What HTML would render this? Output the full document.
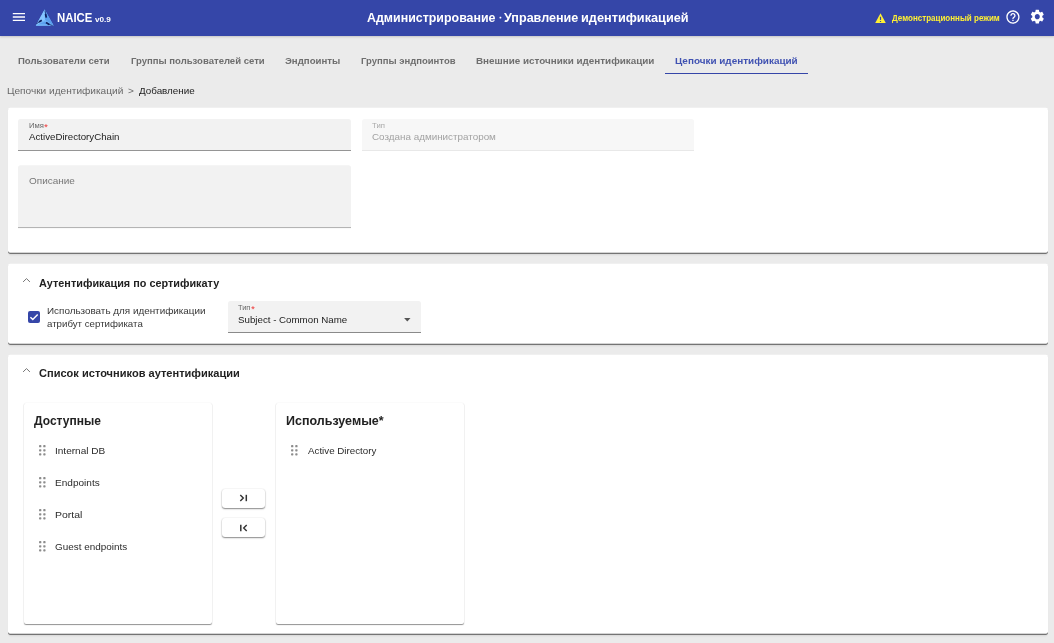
<!DOCTYPE html>
<html lang="ru">
<head>
<meta charset="utf-8">
<title>NAICE</title>
<style>
*{box-sizing:border-box;margin:0;padding:0}
html,body{width:1054px;height:643px;overflow:hidden;background:#ebebeb;font-family:"Liberation Sans",sans-serif;color:#222}
.abs{position:absolute}
.hdr{position:absolute;left:0;top:0;width:1054px;height:36px;background:#3546a8;box-shadow:0 1px 2px rgba(0,0,0,.17)}
.t{position:absolute;white-space:nowrap;line-height:1;transform-origin:0 0}
.card{position:absolute;left:8px;width:1040px;background:#fff;border-radius:2px;box-shadow:0 1px 0.6px rgba(0,0,0,.62),0 2.5px 2px -1px rgba(0,0,0,.09)}
.fld{position:absolute;background:#f2f2f2;border-radius:2.5px 2.5px 0 0;border-bottom:1px solid #8a8a8a}
.pane{position:absolute;background:#fff;border-radius:2px;box-shadow:0 1px 1px rgba(0,0,0,.42),0 0 1.5px rgba(0,0,0,.09)}
.btn{position:absolute;left:222px;width:43px;height:19px;background:#fff;border-radius:3px;box-shadow:0 1px 1.5px rgba(0,0,0,.45),0 0 1.5px rgba(0,0,0,.13)}
.dots{position:absolute;width:7px;height:11px}
</style>
</head>
<body><div id="root" style="position:absolute;left:0;top:0;width:1054px;height:643px;will-change:transform">
<!-- cards -->
<div class="card" style="top:108px;height:145px;transform:translateY(-0.2px)"></div>
<div class="card" style="top:264px;height:80px;transform:translateY(-0.15px)"></div>
<div class="card" style="top:355px;height:279px;transform:translateY(-0.2px)"></div>

<!-- fields -->
<div class="fld" style="left:18px;top:119px;width:332.5px;height:32px;transform:translateY(-0.1px)"></div>
<div class="fld" style="left:362px;top:119px;width:331.5px;height:32px;background:#f7f7f7;border-bottom-color:#e6e6e6;transform:translateY(-0.1px)"></div>
<div class="fld" style="left:18px;top:165px;width:332.5px;height:63px;transform:translateY(0.2px)"></div>
<div class="fld" style="left:228px;top:301px;width:193px;height:32px"></div>

<!-- panes -->
<div class="pane" style="left:23.75px;top:402.75px;width:188px;height:221px"></div>
<div class="pane" style="left:275.75px;top:402.75px;width:188.5px;height:221px"></div>
<div class="btn" style="top:489px"></div>
<div class="btn" style="top:518.25px"></div>
<svg class="abs" style="left:238px;top:492px" width="12" height="12" viewBox="0 0 12 12"><path d="M2.3 3L5.3 6L2.3 9" fill="none" stroke="#333" stroke-width="1.4"/><path d="M8.3 2.8V9.2" stroke="#333" stroke-width="1.5"/></svg>
<svg class="abs" style="left:238px;top:522px" width="12" height="12" viewBox="0 0 12 12"><path d="M8.7 3L5.7 6L8.7 9" fill="none" stroke="#333" stroke-width="1.4"/><path d="M2.8 2.8V9.2" stroke="#333" stroke-width="1.5"/></svg>

<!-- header -->
<div class="hdr">
  <svg class="abs" style="left:12px;top:12px" width="14" height="10" viewBox="0 0 14 10"><path d="M0.8 1.6h12.2M0.8 5h12.2M0.8 8.4h12.2" stroke="#fff" stroke-width="1.4"/></svg>
  <svg class="abs" style="left:35px;top:9px" width="20" height="18" viewBox="0 0 20 18"><path d="M9.6 0.6L18.6 16.6L0.8 16.8Z" fill="#74b8fa"/><path d="M9.6 0.6L18.6 16.6L9.8 11Z" fill="#5a9fee"/><path d="M9.6 0.6L9.8 11L0.8 16.8Z" fill="#86c6ff"/><path d="M0.8 16.8L9.8 11L18.6 16.6Z" fill="#72b6f8"/><path d="M3 15.2L9.8 12.4L16.5 15.2Z" fill="#5a9fee"/><path d="M10 1.6L10.7 5.2" stroke="#16286a" stroke-width="0.8"/><path d="M10.6 5L11.3 8.6" stroke="#0f1f5e" stroke-width="1.8"/><path d="M1.4 14.8L4.2 13" stroke="#16286a" stroke-width="0.8"/><path d="M4 13.1L6.8 11.3" stroke="#0f1f5e" stroke-width="1.8"/><path d="M14 15.3L17.6 16.6" stroke="#16286a" stroke-width="0.8"/><path d="M11 13.6L14.2 15.5" stroke="#0f1f5e" stroke-width="1.8"/></svg>
  <svg class="abs" style="left:875px;top:12.5px" width="11" height="10.5" viewBox="0 0 11 10.5"><path d="M5.5 0.3L10.9 10.2H0.1Z" fill="#fff033"/><path d="M5.5 3.8v3.2M5.5 7.9v1.2" stroke="#3546a8" stroke-width="1.2"/></svg>
  <svg class="abs" style="left:1004.75px;top:8.95px" width="15.9" height="16.1" preserveAspectRatio="none" viewBox="0 0 24 24"><path fill="#fff" d="M11 18h2v-2h-2v2zm1-16C6.48 2 2 6.48 2 12s4.48 10 10 10 10-4.48 10-10S17.52 2 12 2zm0 18c-4.41 0-8-3.59-8-8s3.59-8 8-8 8 3.59 8 8-3.59 8-8 8zm0-14c-2.21 0-4 1.79-4 4h2c0-1.1.9-2 2-2s2 .9 2 2c0 2-3 1.75-3 5h2c0-2.25 3-2.5 3-5 0-2.21-1.79-4-4-4z"/></svg>
  <svg class="abs" style="left:1028.95px;top:8.35px" width="16.6" height="17.3" preserveAspectRatio="none" viewBox="0 0 24 24"><path fill="#fff" d="M19.14 12.94c.04-.3.06-.61.06-.94 0-.32-.02-.64-.07-.94l2.03-1.58a.49.49 0 0 0 .12-.61l-1.92-3.32a.488.488 0 0 0-.59-.22l-2.39.96c-.5-.38-1.03-.7-1.62-.94l-.36-2.54a.484.484 0 0 0-.48-.41h-3.84c-.24 0-.43.17-.47.41l-.36 2.54c-.59.24-1.13.57-1.62.94l-2.39-.96c-.22-.08-.47 0-.59.22L2.74 8.87c-.12.21-.08.47.12.61l2.03 1.58c-.05.3-.09.63-.09.94s.02.64.07.94l-2.03 1.58a.49.49 0 0 0-.12.61l1.92 3.32c.12.22.37.29.59.22l2.39-.96c.5.38 1.03.7 1.62.94l.36 2.54c.05.24.24.41.48.41h3.84c.24 0 .44-.17.47-.41l.36-2.54c.59-.24 1.13-.56 1.62-.94l2.39.96c.22.08.47 0 .59-.22l1.92-3.32c.12-.22.07-.47-.12-.61l-2.01-1.58zM12 15.6c-1.98 0-3.6-1.62-3.6-3.6s1.62-3.6 3.6-3.6 3.6 1.62 3.6 3.6-1.62 3.6-3.6 3.6z"/></svg>
</div>

<svg class="abs" style="left:497px;top:14px" width="7" height="7" viewBox="0 0 7 7"><rect x="2.55" y="2.65" width="1.75" height="1.75" rx="0.4" fill="#fff"/></svg>
<!-- tab underline -->
<div class="abs" style="left:665px;top:73px;width:143px;height:1px;background:#3546a8"></div>

<!-- chevrons -->
<svg class="abs" style="left:22px;top:277px" width="9" height="6" viewBox="0 0 9 6"><path d="M1.1 4.9L4.5 1.6L7.9 4.9" fill="none" stroke="#757575" stroke-width="1"/></svg>
<svg class="abs" style="left:22px;top:367px" width="9" height="6" viewBox="0 0 9 6"><path d="M1.1 4.9L4.5 1.6L7.9 4.9" fill="none" stroke="#757575" stroke-width="1"/></svg>

<!-- checkbox -->
<div class="abs" style="left:28px;top:311px;width:12px;height:12px;background:#3546a8;border-radius:2px"></div>
<svg class="abs" style="left:28px;top:311px" width="12" height="12" viewBox="0 0 12 12"><path d="M2.4 6.2L4.8 8.6L9.7 3.4" fill="none" stroke="#fff" stroke-width="1.4"/></svg>
<!-- select arrow -->
<svg class="abs" style="left:404px;top:318px" width="7" height="4" viewBox="0 0 7 4"><path d="M0.1 0L3.3 3.4L6.5 0Z" fill="#555"/></svg>

<!-- drag handles -->
<svg class="abs" style="left:39px;top:444.8px" width="7" height="11" viewBox="0 0 7 11"><rect x="0.05" y="0.05" width="2.3" height="2.3" rx="0.7" fill="#8c8c8c"/><rect x="0.05" y="4.15" width="2.3" height="2.3" rx="0.7" fill="#8c8c8c"/><rect x="0.05" y="8.25" width="2.3" height="2.3" rx="0.7" fill="#8c8c8c"/><rect x="4.25" y="0.05" width="2.3" height="2.3" rx="0.7" fill="#8c8c8c"/><rect x="4.25" y="4.15" width="2.3" height="2.3" rx="0.7" fill="#8c8c8c"/><rect x="4.25" y="8.25" width="2.3" height="2.3" rx="0.7" fill="#8c8c8c"/></svg>
<svg class="abs" style="left:39px;top:476.8px" width="7" height="11" viewBox="0 0 7 11"><rect x="0.05" y="0.05" width="2.3" height="2.3" rx="0.7" fill="#8c8c8c"/><rect x="0.05" y="4.15" width="2.3" height="2.3" rx="0.7" fill="#8c8c8c"/><rect x="0.05" y="8.25" width="2.3" height="2.3" rx="0.7" fill="#8c8c8c"/><rect x="4.25" y="0.05" width="2.3" height="2.3" rx="0.7" fill="#8c8c8c"/><rect x="4.25" y="4.15" width="2.3" height="2.3" rx="0.7" fill="#8c8c8c"/><rect x="4.25" y="8.25" width="2.3" height="2.3" rx="0.7" fill="#8c8c8c"/></svg>
<svg class="abs" style="left:39px;top:508.8px" width="7" height="11" viewBox="0 0 7 11"><rect x="0.05" y="0.05" width="2.3" height="2.3" rx="0.7" fill="#8c8c8c"/><rect x="0.05" y="4.15" width="2.3" height="2.3" rx="0.7" fill="#8c8c8c"/><rect x="0.05" y="8.25" width="2.3" height="2.3" rx="0.7" fill="#8c8c8c"/><rect x="4.25" y="0.05" width="2.3" height="2.3" rx="0.7" fill="#8c8c8c"/><rect x="4.25" y="4.15" width="2.3" height="2.3" rx="0.7" fill="#8c8c8c"/><rect x="4.25" y="8.25" width="2.3" height="2.3" rx="0.7" fill="#8c8c8c"/></svg>
<svg class="abs" style="left:39px;top:540.8px" width="7" height="11" viewBox="0 0 7 11"><rect x="0.05" y="0.05" width="2.3" height="2.3" rx="0.7" fill="#8c8c8c"/><rect x="0.05" y="4.15" width="2.3" height="2.3" rx="0.7" fill="#8c8c8c"/><rect x="0.05" y="8.25" width="2.3" height="2.3" rx="0.7" fill="#8c8c8c"/><rect x="4.25" y="0.05" width="2.3" height="2.3" rx="0.7" fill="#8c8c8c"/><rect x="4.25" y="4.15" width="2.3" height="2.3" rx="0.7" fill="#8c8c8c"/><rect x="4.25" y="8.25" width="2.3" height="2.3" rx="0.7" fill="#8c8c8c"/></svg>
<svg class="abs" style="left:291px;top:444.8px" width="7" height="11" viewBox="0 0 7 11"><rect x="0.05" y="0.05" width="2.3" height="2.3" rx="0.7" fill="#8c8c8c"/><rect x="0.05" y="4.15" width="2.3" height="2.3" rx="0.7" fill="#8c8c8c"/><rect x="0.05" y="8.25" width="2.3" height="2.3" rx="0.7" fill="#8c8c8c"/><rect x="4.25" y="0.05" width="2.3" height="2.3" rx="0.7" fill="#8c8c8c"/><rect x="4.25" y="4.15" width="2.3" height="2.3" rx="0.7" fill="#8c8c8c"/><rect x="4.25" y="8.25" width="2.3" height="2.3" rx="0.7" fill="#8c8c8c"/></svg>

<!-- texts -->
<div class="t" style="left:56.73px;top:12px;font-size:12.3px;font-weight:bold;color:#fff;transform:scaleX(0.9225)">NAICE</div>
<div class="t" style="left:94.59px;top:16px;font-size:7.2px;font-weight:bold;color:#fff;transform:scaleX(1.1361)">v0.9</div>
<div class="t" style="left:366.56px;top:12px;font-size:12.2px;font-weight:bold;color:#fff;transform:scaleX(1.0183)">Администрирование</div>
<div class="t" style="left:503.63px;top:12px;font-size:12.2px;font-weight:bold;color:#fff;transform:scaleX(1.0321)">Управление</div>
<div class="t" style="left:580.68px;top:12px;font-size:12.2px;font-weight:bold;color:#fff;transform:scaleX(1.0436)">идентификацией</div>
<div class="t" style="left:891.51px;top:14px;font-size:9.2px;font-weight:bold;color:#fff033;transform:scaleX(0.8734)">Демонстрационный режим</div>
<div class="t" style="left:17.74px;top:56px;font-size:9.8px;font-weight:bold;color:#6e6e6e;transform:scaleX(0.9758)">Пользователи сети</div>
<div class="t" style="left:130.67px;top:56px;font-size:9.8px;font-weight:bold;color:#6e6e6e;transform:scaleX(0.9730)">Группы пользователей сети</div>
<div class="t" style="left:284.67px;top:56px;font-size:9.8px;font-weight:bold;color:#6e6e6e;transform:scaleX(0.9843)">Эндпоинты</div>
<div class="t" style="left:360.68px;top:56px;font-size:9.8px;font-weight:bold;color:#6e6e6e;transform:scaleX(0.9698)">Группы эндпоинтов</div>
<div class="t" style="left:475.72px;top:56px;font-size:9.8px;font-weight:bold;color:#6e6e6e;transform:scaleX(1.0062)">Внешние источники идентификации</div>
<div class="t" style="left:674.53px;top:56px;font-size:9.8px;font-weight:bold;color:#4052b2;transform:scaleX(1.0127)">Цепочки идентификаций</div>
<div class="t" style="left:6.62px;top:86px;font-size:9.8px;color:#686868;transform:scaleX(1.0302)">Цепочки идентификаций</div>
<div class="t" style="left:127.73px;top:86px;font-size:9.8px;color:#686868;transform:scaleX(1.0299)">&gt;</div>
<div class="t" style="left:138.59px;top:86px;font-size:9.8px;color:#222;transform:scaleX(1.0040)">Добавление</div>
<div class="t" style="left:28.73px;top:123px;font-size:6.7px;color:#666;transform:scaleX(1.1413)">Имя</div>
<div class="t" style="left:43.61px;top:122px;font-size:9.8px;color:#ee3333;transform:scaleX(1.0277)">*</div>
<div class="t" style="left:28.63px;top:132px;font-size:9.8px;color:#222;transform:scaleX(0.9888)">ActiveDirectoryChain</div>
<div class="t" style="left:371.70px;top:123px;font-size:6.7px;color:#a9a9a9;transform:scaleX(1.1565)">Тип</div>
<div class="t" style="left:371.59px;top:132px;font-size:9.8px;color:#a2a2a2;transform:scaleX(1.0054)">Создана администратором</div>
<div class="t" style="left:28.56px;top:176px;font-size:9.8px;color:#777;transform:scaleX(1.0187)">Описание</div>
<div class="t" style="left:38.67px;top:278px;font-size:11.3px;font-weight:bold;color:#222;transform:scaleX(0.9604)">Аутентификация по сертификату</div>
<div class="t" style="left:46.70px;top:306px;font-size:9.8px;color:#363636;transform:scaleX(1.0077)">Использовать для идентификации</div>
<div class="t" style="left:46.63px;top:319px;font-size:9.8px;color:#363636;transform:scaleX(0.9896)">атрибут сертификата</div>
<div class="t" style="left:237.56px;top:305px;font-size:6.7px;color:#666;transform:scaleX(1.1113)">Тип</div>
<div class="t" style="left:250.74px;top:304px;font-size:9.8px;color:#ee3333;transform:scaleX(1.0275)">*</div>
<div class="t" style="left:237.70px;top:315px;font-size:9.8px;color:#222;transform:scaleX(0.9928)">Subject - Common Name</div>
<div class="t" style="left:38.69px;top:368px;font-size:11.3px;font-weight:bold;color:#222;transform:scaleX(0.9781)">Список источников аутентификации</div>
<div class="t" style="left:33.60px;top:415px;font-size:12.2px;font-weight:bold;color:#222;transform:scaleX(0.9857)">Доступные</div>
<div class="t" style="left:285.51px;top:415px;font-size:12.2px;font-weight:bold;color:#222;transform:scaleX(1.0256)">Используемые*</div>
<div class="t" style="left:54.59px;top:446px;font-size:9.8px;color:#2b2b2b;transform:scaleX(1.0240)">Internal DB</div>
<div class="t" style="left:54.72px;top:478px;font-size:9.8px;color:#2b2b2b;transform:scaleX(1.0257)">Endpoints</div>
<div class="t" style="left:54.54px;top:510px;font-size:9.8px;color:#2b2b2b;transform:scaleX(1.0687)">Portal</div>
<div class="t" style="left:54.67px;top:542px;font-size:9.8px;color:#2b2b2b;transform:scaleX(1.0103)">Guest endpoints</div>
<div class="t" style="left:307.73px;top:446px;font-size:9.8px;color:#2b2b2b;transform:scaleX(0.9967)">Active Directory</div>
</div></body>
</html>
